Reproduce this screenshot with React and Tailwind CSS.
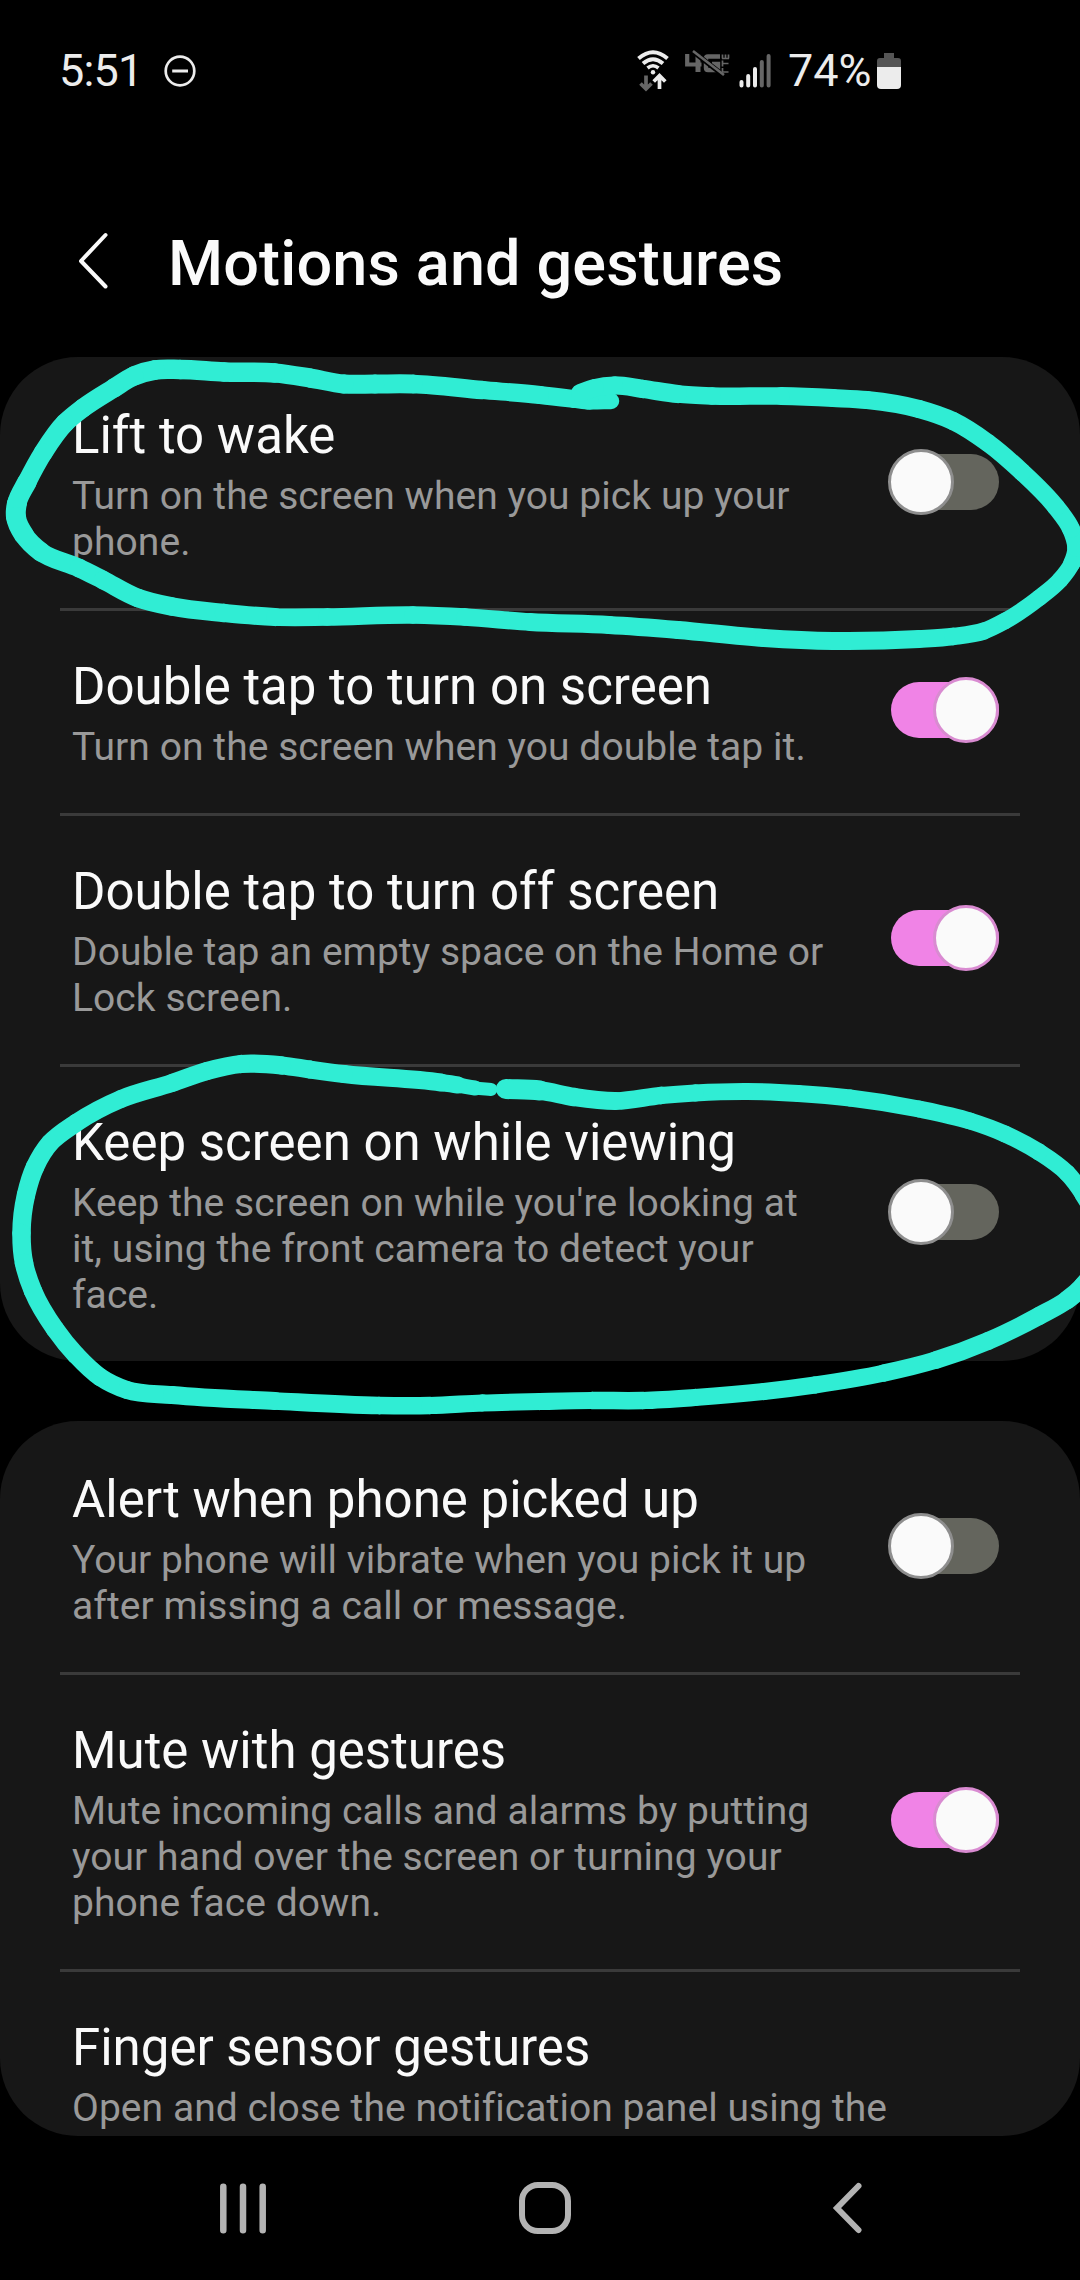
import React from "react";

const GROUPS = [
  [
    { title: "Lift to wake", lines: ["Turn on the screen when you pick up your", "phone."], on: false },
    { title: "Double tap to turn on screen", lines: ["Turn on the screen when you double tap it."], on: true },
    { title: "Double tap to turn off screen", lines: ["Double tap an empty space on the Home or", "Lock screen."], on: true },
    { title: "Keep screen on while viewing", lines: ["Keep the screen on while you're looking at", "it, using the front camera to detect your", "face."], on: false },
  ],
  [
    { title: "Alert when phone picked up", lines: ["Your phone will vibrate when you pick it up", "after missing a call or message."], on: false },
    { title: "Mute with gestures", lines: ["Mute incoming calls and alarms by putting", "your hand over the screen or turning your", "phone face down."], on: true },
    { title: "Finger sensor gestures", lines: ["Open and close the notification panel using the"] },
  ],
];

// Marker strokes as [x, y, width] samples, joined by a smooth curve.
const MARKS = [
  [
    [611, 401, 16], [590, 401, 17], [574, 399, 18], [540, 395, 18], [482, 390, 18], [413, 384, 19], [375, 384, 19], [344, 384, 19], [310, 378, 19], [275, 373, 19.5], [224, 372, 19.5],
    [180, 369.5, 19.5], [155, 370, 19.5], [134, 376, 19.5], [114, 388, 19], [83, 408, 19], [65, 423, 19], [43, 453, 19], [27, 482, 19], [17, 503, 20], [16, 517, 20], [24, 535, 20],
    [41, 552, 19], [79, 568, 18.5], [103, 580, 18.5], [138, 598, 18.5], [172, 606.5, 18.5], [224, 613, 18.5], [275, 617, 18], [327, 617, 17.5], [413, 615, 17.5],
    [465, 617, 17.5], [530, 622, 18], [609, 625, 18], [678, 630, 18], [764, 638, 18], [833, 641, 18], [919, 639, 18], [953, 636.5, 17.5], [984, 631, 17],
    [1005, 621, 16.5], [1039, 598, 16.5], [1060, 580, 16.5], [1072, 563, 17], [1076, 548, 17.5], [1071, 529, 18], [1056, 507, 18], [1022, 472, 18],
    [988, 443, 18], [953, 421, 18], [919, 409, 18], [867, 400, 18], [833, 398, 18], [781, 396, 18], [712, 396, 17], [678, 394, 18], [643, 389, 18.5],
    [614, 385.5, 18], [595, 388, 18], [580, 393, 18],
  ],
  [
    [491, 1089.5, 12], [475, 1088, 14], [458, 1085, 16], [441, 1082.5, 18], [344, 1074, 18], [310, 1069.5, 18], [282, 1065.5, 18], [241, 1064, 18.5], [207, 1071, 18], [172, 1083, 18],
    [121, 1099, 18], [76, 1123, 18], [50, 1143, 18.5], [35, 1167, 18.5], [26, 1195, 18.5], [21.5, 1233, 18.5], [24, 1263, 18.5], [33, 1291, 18.5],
    [55, 1329, 18.5], [76, 1355, 18.5], [100, 1377, 18], [127, 1390, 18], [172, 1395, 18], [275, 1401, 18], [379, 1405.5, 17.5], [430, 1405.5, 17.5],
    [482, 1403, 17], [540, 1401.5, 17], [592, 1400.5, 17.5], [643, 1400.5, 17.5], [695, 1397.5, 17], [764, 1391.5, 17], [815, 1385, 17], [884, 1373, 17],
    [936, 1360, 17.5], [988, 1341, 18], [1039, 1316, 18], [1067, 1300, 18.5], [1083, 1286, 19], [1098, 1265, 19], [1100, 1230, 18], [1083, 1194, 17],
    [1067, 1173, 17], [1039, 1152, 17], [1005, 1134, 17], [970, 1121, 17], [919, 1109, 17], [850, 1098, 17], [798, 1093.5, 17], [747, 1091.5, 17],
    [695, 1093, 17], [661, 1095.5, 17.5], [616, 1101, 18], [574, 1097, 18], [540, 1090.5, 19], [506, 1089, 21],
  ],
];

const dist = (a, b) => Math.hypot(b[0] - a[0], b[1] - a[1]);

// Direction per unit length at point i, weighted towards its nearer neighbour.
function tangent(pts, i, k) {
  const a = pts[i - 1];
  const p = pts[i];
  const b = pts[i + 1];
  if (!a) return (b[k] - p[k]) / dist(p, b);
  if (!b) return (p[k] - a[k]) / dist(a, p);
  const h1 = dist(a, p);
  const h2 = dist(p, b);
  return (((p[k] - a[k]) / h1) * h2 + ((b[k] - p[k]) / h2) * h1) / (h1 + h2);
}

function Mark({ points }) {
  return points.slice(0, -1).map((p, i) => {
    const q = points[i + 1];
    const h = dist(p, q) / 3;
    const c1 = [0, 1].map((k) => p[k] + tangent(points, i, k) * h);
    const c2 = [0, 1].map((k) => q[k] - tangent(points, i + 1, k) * h);
    return <path key={i} d={`M${p[0]} ${p[1]}C${c1[0]} ${c1[1]} ${c2[0]} ${c2[1]} ${q[0]} ${q[1]}`} strokeWidth={(p[2] + q[2]) / 2} />;
  });
}

function Toggle({ on }) {
  return (
    <div className={`relative mb-[2px] h-14 w-[108px] shrink-0 rounded-full ${on ? "bg-[#f083e6]" : "bg-[#64655d]"}`}>
      <div className={`absolute -top-[5px] size-[66px] rounded-full border-[3px] bg-[#fafafa] ${on ? "right-0 border-[#d98bd1]" : "-left-[3px] border-[#8e8e8e]"}`} />
    </div>
  );
}

function Row({ title, lines, on, first }) {
  return (
    <div>
      {!first && <div className="mx-[60px] -mb-[3px] h-[3px] bg-[#3a3a3a]" />}
      <div className="flex items-center justify-between pl-[72px] pr-[81px]">
        <div className="pt-[49px] pb-[43px] whitespace-nowrap">
          <div className="mb-[7px] text-[51px] leading-[60px] text-[#fafafa]">{title}</div>
          {lines.map((line) => (
            <div key={line} className="text-[39px] leading-[46px] tracking-[0.06px] text-[#999999]">{line}</div>
          ))}
        </div>
        {on !== undefined && <Toggle on={on} />}
      </div>
    </div>
  );
}

function StatusBar() {
  return (
    <div className="flex h-[142px] items-center pl-[59px] text-[45px] leading-[60px] text-[#ececec]">
      <div className="w-[105px] tracking-[-0.8px]">5:51</div>
      <svg className="h-8 w-8" viewBox="0 0 32 32" fill="none" stroke="#ececec">
        <circle cx="16" cy="16" r="14.3" strokeWidth="2.7" />
        <path d="M8.2 16H24" strokeWidth="3" />
      </svg>
      <svg className="ml-[441px] h-[42px] w-8" viewBox="0 0 32 42" fill="none" stroke="#ececec">
        <path d="M1.5 8.5Q16 -4 30.5 8.5" strokeWidth="4" />
        <path d="M6 13.5Q16 5 26 13.5" strokeWidth="4" />
        <path d="M10.5 18Q16 13.5 21.5 18" strokeWidth="3.6" />
        <circle cx="16" cy="22.3" r="2.2" fill="#ececec" stroke="none" />
        <path d="M9 25.5V38M3.5 33.5L9 39L14.5 33.5" stroke="#666" strokeWidth="3.7" />
        <path d="M22.5 39V26M16.7 31.5L22.5 25.7L28.3 31.5" strokeWidth="3.7" />
      </svg>
      <svg className="-mt-4 ml-[16px] h-[26px] w-[46px]" viewBox="0 0 46 26" fill="none" stroke="#666">
        <path d="M2.2 4V14.5H16.500" strokeWidth="4.2" />
        <path d="M13 4V22" strokeWidth="5" />
        <path d="M35 6.500H23Q21 6.500 21 8.500V18Q21 20 23 20H33V14H27" strokeWidth="4.400" />
        <path d="M8 1.500L38 25" stroke="#000" strokeWidth="5" />
        <path d="M8 1L39 25" strokeWidth="2.600" />
        <path d="M43.500 22H37.500V18M37.500 13.500H43.500M37.500 10.500V16.500M43.500 8.500V4.500M37.500 8.500V4.500M40.500 8.500V4.500M37 8.500H44" strokeWidth="1.700" />
      </svg>
      <svg className="ml-[8px] h-[36px] w-8" viewBox="0 0 32 36" strokeWidth="4" strokeLinecap="round">
        <path d="M2.5 29V32.500M9.200 23V32.500M16 16V32.500" stroke="#ececec" />
        <path d="M22.800 9V32.500M29.600 3V32.500" stroke="#666" />
      </svg>
      <div className="ml-[17px] w-[89px]">74%</div>
      <svg className="h-9 w-6" viewBox="0 0 24 36">
        <path d="M7 0H17V5H21Q24 5 24 8V15H0V8Q0 5 3 5H7Z" fill="#555" />
        <path d="M0 14H24V32Q24 36 20 36H4Q0 36 0 32Z" fill="#ececec" />
      </svg>
    </div>
  );
}

export default function App() {
  return (
    <div className="relative flex h-[2280px] w-[1080px] flex-col overflow-hidden bg-black font-['Roboto',sans-serif]">
      <StatusBar />
      <div className="flex h-[215px] items-center pl-[78px] pt-[12px]">
        <svg className="mt-[10px] h-[58px] w-[30px]" viewBox="0 0 30 58" fill="none" stroke="#fafafa" strokeWidth="4" strokeLinecap="round" strokeLinejoin="round">
          <path d="M27.500 3L3 29L27.500 54.500" />
        </svg>
        <h1 className="mt-4 ml-[60px] text-[63px] leading-[74px] font-medium tracking-[0.13px] whitespace-nowrap text-[#fafafa]">Motions and gestures</h1>
      </div>
      <div className="flex h-[1779px] flex-col gap-[60px]">
        {GROUPS.map((rows, i) => (
          <div key={i} className={`overflow-hidden rounded-[78px] bg-[#171717] ${i === 0 ? "h-[1004px] shrink-0" : "min-h-0 flex-1"}`}>
            {rows.map((row, j) => (
              <Row key={row.title} {...row} first={j === 0} />
            ))}
          </div>
        ))}
      </div>
      <div className="flex flex-1 items-center pl-[220px]">
        <svg className="h-[52px] w-[46px]" viewBox="0 0 46 52" stroke="#b3b3b3" strokeWidth="6.500" strokeLinecap="round">
          <path d="M3.300 4.800V48.200M23 4.800V48.200M42.700 4.800V48.200" />
        </svg>
        <div className="ml-[253px] size-[52px] rounded-[19px] border-[6px] border-[#b3b3b3]" />
        <svg className="ml-[261px] h-[52px] w-[30px]" viewBox="0 0 30 52" fill="none" stroke="#b3b3b3" strokeWidth="6" strokeLinecap="round">
          <path d="M26.500 4L5 26L26.500 48" />
        </svg>
      </div>
      <svg className="pointer-events-none absolute inset-0 h-full w-full" viewBox="0 0 1080 2280" fill="none" stroke="#30edd4" strokeLinecap="round">
        {MARKS.map((points, i) => (
          <Mark key={i} points={points} />
        ))}
      </svg>
    </div>
  );
}
